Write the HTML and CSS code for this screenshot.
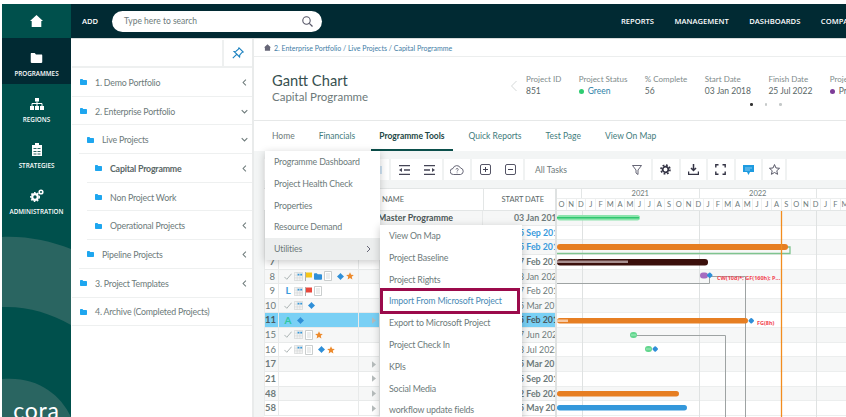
FILE: index.html
```html
<!DOCTYPE html>
<html lang="en">
<head>
<meta charset="utf-8">
<title>Gantt Chart</title>
<link rel="stylesheet" href="styles.css">
</head>
<body>
<svg class="defs" width="0" height="0">
  <symbol id="folder" viewBox="0 0 12 10"><path d="M0 1.2C0 .5.5 0 1.2 0h3l1.3 1.5h5.3c.7 0 1.2.5 1.2 1.2v6.1c0 .7-.5 1.2-1.2 1.2H1.2C.5 10 0 9.500 0 8.800z" fill="currentColor"/></symbol>
  <symbol id="left" viewBox="0 0 8 10"><path d="M6 1 2 5l4 4" fill="none" stroke="currentColor" stroke-width="1.500"/></symbol>
  <symbol id="down" viewBox="0 0 10 8"><path d="M1 2l4 4 4-4" fill="none" stroke="currentColor" stroke-width="1.500"/></symbol>
  <symbol id="check" viewBox="0 0 10 8"><path d="M.5 4.500 3.500 7.500 9.500 .5" fill="none" stroke="#9aa3a3" stroke-width="1"/></symbol>
  <symbol id="tbl" viewBox="0 0 10 10"><path d="M.5.5h9v9h-9z" fill="#f2f3f3" stroke="#c9cdcd" stroke-width=".6"/><path d="M3.500.5v9M6.500.5v9M.5 3.500h9M.5 6.500h9" stroke="#c9cdcd" stroke-width=".5"/><path d="M4 2h2v2H4zM7 2h2v2H7z" fill="#3498db"/></symbol>
  <symbol id="doc" viewBox="0 0 8 10"><path d="M.5.5h7v9h-7z" fill="#fff" stroke="#bcc2c2" stroke-width=".8"/><path d="M2 3h4M2 5h4M2 7h4" stroke="#c9cdcd" stroke-width=".7"/></symbol>
  <symbol id="flag" viewBox="0 0 7 9"><path d="M.5 0v9" stroke="#999" stroke-width=".8"/><path d="M1 .5h6v5H1z" fill="currentColor"/></symbol>
  <symbol id="dia" viewBox="0 0 8 8"><path d="M4 0l1.300 1.500L8 4 5.300 6.500 4 8 2.700 6.500 0 4l2.700-2.500z" fill="#2f8fd8"/></symbol>
  <symbol id="star" viewBox="0 0 10 10"><path d="M5 .3 6.400 3.500l3.400.3-2.600 2.200.8 3.400L5 7.600 2 9.400l.8-3.400L.2 3.800l3.400-.3z" fill="#ed8a2c"/></symbol>
  <symbol id="tri" viewBox="0 0 5 8"><path d="M0 0l5 4-5 4z" fill="#b5bbbb"/></symbol>
</svg>
<div class="app">
  <nav class="rail">
    <svg class="rail-arcs" width="69" height="413" viewBox="0 0 69 413"><path d="M0 233C25 232 48 237 69 245V321C48 309 25 302 0 303z" fill="#2a6561"/><path d="M0 375C35 372 58 390 69 413H0z" fill="#2a6561"/></svg>
    <a class="rail-home"><svg width="13" height="12" viewBox="0 0 13 12"><path d="M6.500 0 13 6h-1.700v6H1.700V6H0z" fill="#fff"/></svg></a>
    <a class="rail-item active"><div class="rail-ic"><svg width="13" height="10" viewBox="0 0 12 10"><use href="#folder" color="#fff"/></svg></div><span>PROGRAMMES</span></a>
    <a class="rail-item"><div class="rail-ic"><svg width="14" height="12" viewBox="0 0 14 12"><path d="M5 0h4v3.500H5zM0 8h4v4H0zM5 8h4v4H5zM10 8h4v4h-4z" fill="#fff"/><path d="M2 8V5.500h10V8M7 3.500V8" fill="none" stroke="#fff"/></svg></div><span>REGIONS</span></a>
    <a class="rail-item"><div class="rail-ic"><svg width="10" height="13" viewBox="0 0 10 13"><path d="M0 2h10v11H0z" fill="#fff"/><path d="M3 0h4v3H3z" fill="#fff"/><path d="M1.500 5h3v1h-3zM5.500 5h3v1h-3zM1.500 8h3v1h-3zM5.500 8h3v1h-3zM1.500 10.500h3v1h-3zM5.500 10.500h3v1h-3z" fill="#2a6561"/></svg></div><span>STRATEGIES</span></a>
    <a class="rail-item"><div class="rail-ic"><svg width="14" height="13" viewBox="0 0 14 13"><circle cx="5" cy="8" r="2.800" fill="none" stroke="#fff" stroke-width="2.200"/><circle cx="11" cy="3" r="1.800" fill="none" stroke="#fff" stroke-width="1.600"/><circle cx="5" cy="8" r="4.400" fill="none" stroke="#fff" stroke-width="1.200" stroke-dasharray="1.600 1.600"/></svg></div><span>ADMINISTRATION</span></a>
    <div class="rail-logo">cora</div>
  </nav>
  <div class="column">
    <header class="top">
      <span class="add">ADD</span>
      <div class="search">
        <span>Type here to search</span>
        <svg width="11" height="11" viewBox="0 0 11 11"><circle cx="4.500" cy="4.500" r="3.700" fill="none" stroke="#556" stroke-width="1.100"/><path d="M7.300 7.300 10.500 10.500" stroke="#556" stroke-width="1.200"/></svg>
      </div>
      <div class="top-nav"><span>REPORTS</span><span>MANAGEMENT</span><span>DASHBOARDS</span><span>COMPANY</span></div>
    </header>
    <div class="body">
      <aside class="tree">
        <div class="pin-row"><div class="pin"><svg width="12" height="12" viewBox="0 0 12 12"><path d="M7 .8 11.200 5 9.800 5.600 7.800 8 7.600 10 2 4.400 4 4.200 6.400 2.200zM4.400 7.600 .8 11.200" fill="none" stroke="#1c82c0" stroke-width="1.100"/></svg></div></div>
        <div class="node"><svg class="fi"><use href="#folder"/></svg><span>1. Demo Portfolio</span><svg class="chev"><use href="#left"/></svg></div>
        <div class="node"><svg class="fi"><use href="#folder"/></svg><span>2. Enterprise Portfolio</span><svg class="chev"><use href="#down"/></svg></div>
        <div class="node l1"><svg class="fi"><use href="#folder"/></svg><span>Live Projects</span><svg class="chev"><use href="#down"/></svg></div>
        <div class="node l2"><svg class="fi"><use href="#folder"/></svg><span class="cur">Capital Programme</span><svg class="chev"><use href="#left"/></svg></div>
        <div class="node l2"><svg class="fi"><use href="#folder"/></svg><span>Non Project Work</span></div>
        <div class="node l2"><svg class="fi"><use href="#folder"/></svg><span>Operational Projects</span><svg class="chev"><use href="#left"/></svg></div>
        <div class="node l1"><svg class="fi"><use href="#folder"/></svg><span>Pipeline Projects</span><svg class="chev"><use href="#left"/></svg></div>
        <div class="node"><svg class="fi"><use href="#folder"/></svg><span>3. Project Templates</span><svg class="chev"><use href="#left"/></svg></div>
        <div class="node"><svg class="fi"><use href="#folder"/></svg><span>4. Archive (Completed Projects)</span></div>
      </aside>
      <main class="main">
        <div class="crumb"><svg width="7" height="7" viewBox="0 0 13 12"><path d="M6.500 0 13 6h-1.700v6H1.700V6H0z" fill="#667"/></svg><span>2. Enterprise Portfolio / Live Projects / Capital Programme</span></div>
        <section class="head">
          <div class="title"><h1>Gantt Chart</h1><p>Capital Programme</p></div>
          <svg class="prev" width="8" height="12" viewBox="0 0 8 12"><path d="M6.500 1 1.500 6l5 5" fill="none" stroke="#d5d9d9" stroke-width="1"/></svg>
          <div class="stats">
            <div class="stat"><label>Project ID</label><b>851</b></div>
            <div class="stat"><label>Project Status</label><b class="link"><i class="dot green"></i>Green</b></div>
            <div class="stat"><label>% Complete</label><b>56</b></div>
            <div class="stat"><label>Start Date</label><b>03 Jan 2018</b></div>
            <div class="stat"><label>Finish Date</label><b>25 Jul 2022</b></div>
            <div class="stat"><label>Project Phase</label><b><i class="dot purple"></i>Programme</b></div>
          </div>
          <div class="pager"><i class="on"></i><i></i><i></i></div>
        </section>
        <div class="tabs">
          <a class="plain">Home</a><a>Financials</a><a class="on">Programme Tools</a><a>Quick Reports</a><a>Test Page</a><a>View On Map</a>
        </div>
        <div class="tools">
          <div class="tool t1"><i class="tb-blue"></i></div>
          <div class="tool t2">
            <svg width="11" height="10" viewBox="0 0 11 10"><path d="M0 .5h11M5 5h6M0 9.500h11" stroke="#445" stroke-width="1.500"/><path d="M0 5l3-2v4z" fill="#445"/></svg>
            <svg width="11" height="10" viewBox="0 0 11 10"><path d="M0 .5h11M0 5h6M0 9.500h11" stroke="#445" stroke-width="1.500"/><path d="M11 5 8 3v4z" fill="#445"/></svg>
          </div>
          <div class="tool t3"><svg width="14" height="10" viewBox="0 0 14 10"><path d="M3.500 9.500A3 3 0 0 1 3 3.500 4 4 0 0 1 10.500 3a3.300 3.300 0 0 1 0 6.500z" fill="none" stroke="#556" stroke-width=".9"/><path d="M6 4.500c0-1.500 2.200-1.500 2.200 0 0 1-1.100 1-1.100 2M7.100 7.500v.8" fill="none" stroke="#556" stroke-width=".8"/></svg></div>
          <div class="tool t4">
            <svg width="11" height="11" viewBox="0 0 11 11"><rect x=".5" y=".5" width="10" height="10" rx="1.500" fill="none" stroke="#556"/><path d="M3 5.500h5M5.500 3v5" stroke="#445"/></svg>
            <svg width="11" height="11" viewBox="0 0 11 11"><rect x=".5" y=".5" width="10" height="10" rx="1.500" fill="none" stroke="#556"/><path d="M3 5.500h5" stroke="#445"/></svg>
          </div>
          <div class="tool t5"><span>All Tasks</span><svg width="10" height="10" viewBox="0 0 10 10"><path d="M.5.5h9L6 5v4.500L4 8V5z" fill="none" stroke="#556" stroke-width=".9"/></svg></div>
          <div class="tool t6"><svg width="11" height="11" viewBox="0 0 11 11"><circle cx="5.500" cy="5.500" r="2.800" fill="none" stroke="#334" stroke-width="1.700"/><circle cx="5.500" cy="5.500" r="4.500" fill="none" stroke="#334" stroke-width="1.600" stroke-dasharray="1.800 1.730"/></svg></div>
          <div class="tool t6"><svg width="11" height="11" viewBox="0 0 11 11"><path d="M5.500 0v6M3 4l2.500 2.500L8 4" fill="none" stroke="#334" stroke-width="1.500"/><path d="M.5 7.500v3h10v-3" fill="none" stroke="#334" stroke-width="1.500"/></svg></div>
          <div class="tool t6"><svg width="11" height="11" viewBox="0 0 11 11"><path d="M.8 3.500V.8h2.700M7.500.8h2.700v2.700M10.200 7.500v2.700H7.500M3.500 10.200H.8V7.500" fill="none" stroke="#334" stroke-width="1.400"/></svg></div>
          <div class="tool t6"><svg width="11" height="10" viewBox="0 0 11 10"><path d="M0 0h11v7H7L5.500 10 4 7H0z" fill="#1e9be0"/><path d="M2 3h7M2 5h5" stroke="#cfeafa" stroke-width=".6"/></svg></div>
          <div class="tool t7"><svg width="11" height="11" viewBox="0 0 10 10"><path d="M5 .5 6.300 3.600l3.300.3-2.500 2.200.7 3.300L5 7.700 2.200 9.400l.7-3.300L.4 3.900l3.300-.3z" fill="none" stroke="#445" stroke-width=".8"/></svg></div>
          <div class="tool t8"></div>
        </div>
        <div class="gantt">
          <div class="grid">
            <div class="g-head"><span class="hn">NAME</span><span class="hd">START DATE</span></div>
            <div class="g-row alt bold"><span></span><span></span><span class="arr"></span><span class="nm">Master Programme</span><span class="dt">03 Jan 2018</span></div>
            <div class="g-row bold"><span></span><span></span><span class="arr"></span><span class="nm"></span><span class="dt blue">05 Sep 2018</span></div>
            <div class="g-row alt bold"><span></span><span></span><span class="arr"></span><span class="nm"></span><span class="dt blue">05 Feb 2018</span></div>
            <div class="g-row bold"><span>7</span><span></span><span class="arr"></span><span class="nm"></span><span class="dt">07 Feb 2018</span></div>
            <div class="g-row alt"><span>8</span><span class="ic"><svg class="i-chk"><use href="#check"/></svg><svg class="i-tbl"><use href="#tbl"/></svg><svg class="i-flag yel"><use href="#flag"/></svg><svg class="i-fold"><use href="#folder"/></svg><svg class="i-doc"><use href="#doc"/></svg><svg class="i-dia"><use href="#dia"/></svg><svg class="i-star"><use href="#star"/></svg></span><span></span><span class="nm"></span><span class="dt">03 Jan 2022</span></div>
            <div class="g-row"><span>9</span><span class="ic"><b class="ltr l">L</b><svg class="i-tbl"><use href="#tbl"/></svg><svg class="i-flag red"><use href="#flag"/></svg><svg class="i-doc"><use href="#doc"/></svg></span><span></span><span class="nm"></span><span class="dt">07 Feb 2018</span></div>
            <div class="g-row alt"><span>10</span><span class="ic"><svg class="i-chk"><use href="#check"/></svg><svg class="i-tbl"><use href="#tbl"/></svg><svg class="i-dia"><use href="#dia"/></svg></span><span></span><span class="nm"></span><span class="dt">05 Mar 2018</span></div>
            <div class="g-row sel bold"><span>11</span><span class="ic"><b class="ltr a">A</b><svg class="i-dia"><use href="#dia"/></svg></span><span class="arr"><svg class="i5"><use href="#tri"/></svg></span><span class="nm"></span><span class="dt">05 Feb 2018</span></div>
            <div class="g-row alt"><span>15</span><span class="ic"><svg class="i-chk"><use href="#check"/></svg><svg class="i-tbl"><use href="#tbl"/></svg><svg class="i-doc"><use href="#doc"/></svg><svg class="i-star"><use href="#star"/></svg></span><span></span><span class="nm"></span><span class="dt">07 Jun 2022</span></div>
            <div class="g-row"><span>16</span><span class="ic"><svg class="i-chk"><use href="#check"/></svg><svg class="i-tbl"><use href="#tbl"/></svg><svg class="i-doc"><use href="#doc"/></svg><svg class="i-dia"><use href="#dia"/></svg><svg class="i-star"><use href="#star"/></svg></span><span></span><span class="nm"></span><span class="dt">23 Jul 2022</span></div>
            <div class="g-row alt bold"><span>17</span><span></span><span class="arr"><svg class="i5"><use href="#tri"/></svg></span><span class="nm"></span><span class="dt">05 Mar 2018</span></div>
            <div class="g-row bold"><span>21</span><span></span><span class="arr"><svg class="i5"><use href="#tri"/></svg></span><span class="nm"></span><span class="dt">05 Sep 2018</span></div>
            <div class="g-row alt bold"><span>48</span><span></span><span class="arr"><svg class="i5"><use href="#tri"/></svg></span><span class="nm"></span><span class="dt">02 Feb 2022</span></div>
            <div class="g-row bold"><span>58</span><span></span><span class="arr"><svg class="i5"><use href="#tri"/></svg></span><span class="nm"></span><span class="dt">05 May 2018</span></div>
          </div>
          <div class="splitter"></div>
          <div class="chart">
            <div class="years"><span class="y0"></span><span class="y1">2021</span><span class="y1">2022</span><span class="y2"></span></div>
            <div class="months"><span>O</span><span>N</span><span>D</span><span>J</span><span>F</span><span>M</span><span>A</span><span>M</span><span>J</span><span>J</span><span>A</span><span>S</span><span>O</span><span>N</span><span>D</span><span>J</span><span>F</span><span>M</span><span>A</span><span>M</span><span>J</span><span>J</span><span>A</span><span>S</span><span>O</span><span>N</span><span>D</span><span>J</span><span>F</span><span>M</span></div>
            <div class="c-row alt"></div><div class="c-row"></div><div class="c-row alt"></div><div class="c-row"></div><div class="c-row alt"></div><div class="c-row"></div><div class="c-row alt"></div><div class="c-row"></div><div class="c-row alt"></div><div class="c-row"></div><div class="c-row alt"></div><div class="c-row"></div><div class="c-row alt"></div><div class="c-row"></div>
            <svg class="plot" width="289" height="207" viewBox="557 211 289 207">
              <path d="M582.500 211V418M699.500 211V418M816.500 211V418" stroke="#dfe2e2" stroke-width="1"/>
              <rect x="557" y="215" width="83" height="5.500" rx="2.700" fill="#8de4ad"/><path d="M557 217.700H639" stroke="#2fc66f" stroke-width="1.400"/>
              <path d="M557 253.500H790V247H787" fill="none" stroke="#7fc48f" stroke-width="1.300"/>
              <rect x="557" y="244" width="231" height="6" rx="3" fill="#e67e22"/>
              <rect x="557" y="259" width="151" height="6.500" rx="3" fill="#3b0f0b"/><rect x="557" y="260.500" width="71" height="2.500" fill="#a99090"/>
              <path d="M557 283.500H709.500V277M710 276.500H745.500V418M637 335.500H725.500V418" fill="none" stroke="#9ea3a3" stroke-width="1"/>
              <rect x="700" y="272.500" width="8" height="6" rx="3" fill="#a66cc0"/><rect x="707.500" y="273" width="4.500" height="4.500" rx="1" transform="rotate(45 709.750 275.250)" fill="#2f8fd8"/>
              <text x="717" y="279.500" class="note">CW(10d)*; GF(160h); P...</text>
              <rect x="557" y="318" width="191" height="5.500" rx="2.700" fill="#e67e22"/><rect x="557" y="319.500" width="11" height="2.500" fill="#f7c9a3"/>
              <rect x="749" y="318.500" width="4.500" height="4.500" rx="1" transform="rotate(45 751.250 320.750)" fill="#2f8fd8"/>
              <text x="757" y="324.500" class="note">FG(8h)</text>
              <rect x="630" y="332" width="7" height="6" rx="3" fill="#63d68e"/><path d="M631 335h5" stroke="#a5ecc0" stroke-width="1"/>
              <rect x="645" y="346" width="7" height="6" rx="3" fill="#63d68e"/><path d="M646 349h5" stroke="#a5ecc0" stroke-width="1"/>
              <rect x="653" y="346.800" width="4.500" height="4.500" rx="1" transform="rotate(45 655.250 349)" fill="#2f8fd8"/>
              <rect x="557" y="391" width="122" height="5.500" rx="2.700" fill="#e67e22"/>
              <rect x="557" y="405" width="130" height="5.500" rx="2.700" fill="#3498db"/>
              <path d="M781.500 211V418" stroke="#f28c1e" stroke-width="1.300"/>
            </svg>
          </div>
        </div>
        <ul class="menu m1">
          <li>Programme Dashboard</li><li>Project Health Check</li><li>Properties</li><li>Resource Demand</li>
          <li class="hover">Utilities<svg width="5" height="8" viewBox="0 0 5 8"><path d="M1 1l3 3-3 3" fill="none" stroke="#667" stroke-width="1"/></svg></li>
        </ul>
        <ul class="menu m2">
          <li>View On Map</li><li>Project Baseline</li><li>Project Rights</li><li class="mark">Import From Microsoft Project</li><li>Export to Microsoft Project</li><li>Project Check In</li><li>KPIs</li><li>Social Media</li><li>workflow update fields</li>
        </ul>
      </main>
    </div>
  </div>
</div>
</body>
</html>
```

FILE: styles.css
```css
* { box-sizing: border-box; }
html, body { margin: 0; height: 100%; }
body {
  width: 846px; height: 417px; overflow: hidden; background: #fff;
  padding: 4px 0 0 2px;
  font-family: "Lato", "Open Sans", sans-serif; color: #6d7a7a;
}
.defs { position: absolute; }
.app { display: flex; height: 413px; }

.rail { position: relative; width: 69px; flex: none; background: #00504c; display: flex; flex-direction: column; align-items: center; color: #fff; font-family: "Open Sans", sans-serif; }
.rail-arcs { position: absolute; left: 0; top: 0; }
.rail-home { position: relative; width: 100%; height: 34px; display: flex; align-items: center; justify-content: center; }
.rail-item { position: relative; width: 100%; height: 46px; display: flex; flex-direction: column; align-items: center; padding-top: 12.500px; gap: 5px; font-size: 6.300px; line-height: 8px; font-weight: 600; }
.rail-ic { height: 14px; display: flex; align-items: center; }
.rail-item.active { background: #012a33; }
.rail-logo { position: relative; margin-top: auto; height: 11px; line-height: 9px; font-family: "Lato", sans-serif; font-size: 23px; letter-spacing: .8px; }

.column { flex: 1; min-width: 0; display: flex; flex-direction: column; }
.top { height: 34px; flex: none; background: #012a33; display: flex; align-items: center; color: #fff; font-family: "Open Sans", sans-serif; font-size: 7.600px; font-weight: 600; padding-left: 11px; }
.add { width: 30px; flex: none; }
.search { width: 210px; flex: none; height: 21px; background: #fff; border-radius: 11px; display: flex; align-items: center; justify-content: space-between; padding: 0 9px 0 12px; color: #6d7a7a; font-family: "Lato", sans-serif; font-size: 8.500px; font-weight: 400; }
.top-nav { margin-left: 299px; display: flex; gap: 20.500px; white-space: nowrap; flex: none; }

.body { flex: 1; min-height: 0; display: flex; border-top: 1px solid #d8dcdc; }
.tree { width: 181px; flex: none; font-size: 8.800px; letter-spacing: -.2px; padding-left: 1px; }
.pin-row { height: 29px; display: flex; justify-content: flex-end; border-bottom: 2px solid #eef0f0; }
.pin { width: 30px; margin-top: 1px; border-left: 2px solid #eef0f0; display: flex; align-items: center; justify-content: center; }
.node { height: 28.700px; display: flex; align-items: center; border-bottom: 1.500px solid #eef0f0; padding: 1px 0 0 8px; }
.node.l1 { margin-left: 7px; }
.node.l2 { margin-left: 15px; }
.fi { width: 7px; height: 6px; color: #1ea6ef; flex: none; margin-right: 8px; }
.chev { width: 7px; height: 7px; margin-left: auto; margin-right: 4px; color: #6d7a7a; }
.cur { font-weight: 700; color: #5a6767; }

.main { position: relative; flex: 1; min-width: 0; border-left: 2px solid #e9ebeb; background: #f3f5f5; display: flex; flex-direction: column; overflow: hidden; }
.crumb { height: 18px; flex: none; background: #fff; border-bottom: 1px solid #eceeee; display: flex; align-items: center; gap: 3px; padding-left: 10px; font-size: 7px; color: #3f7ea6; }
.head { position: relative; height: 64px; flex: none; background: #fff; border-bottom: 1px solid #e6e8e8; display: flex; padding-left: 18px; white-space: nowrap; }
.title { width: 238px; flex: none; padding-top: 14px; }
.title h1 { margin: 0; font-size: 14.700px; line-height: 19px; font-weight: 400; color: #37504f; }
.title p { margin: 0; font-size: 11.500px; line-height: 14px; color: #6d7a7a; }
.prev { margin-top: 23px; flex: none; }
.stats { display: flex; gap: 17.500px; margin-left: 8px; padding-top: 16px; font-size: 8px; flex: none; }
.stat { display: flex; flex-direction: column; line-height: 12px; }
.stat label { color: #808b8b; }
.stat b { font-weight: 400; font-size: 8.500px; color: #5a6767; }
.stat b.link { color: #2e7fa8; }
.dot { display: inline-block; width: 5px; height: 5px; border-radius: 50%; margin-right: 4px; vertical-align: 0; }
.green { background: #2ecc71; }
.purple { background: #7d3c98; }
.pager { position: absolute; left: 496px; top: 46px; display: flex; gap: 12px; }
.pager i { width: 2.500px; height: 2.500px; border-radius: 50%; background: #c5c9c9; }
.pager i.on { background: #333; }

.tabs { height: 30px; flex: none; background: #fff; display: flex; gap: 8px; padding-left: 10px; font-size: 8.500px; color: #3f7c7c; }
.tabs a { padding: 2px 8px 0; line-height: 26px; border-bottom: 2px solid transparent; }
.tabs a.plain { color: #6d7a7a; }
.tabs a.on { color: #1d4745; font-weight: 700; border-bottom-color: #0b4f4b; }

.tools { margin: 8px 0 8px 10px; height: 21px; flex: none; display: flex; background: #fff; }
.tool { height: 100%; display: flex; align-items: center; justify-content: center; border-right: 2px solid #f0f2f2; flex: none; }
.t1 { width: 127px; justify-content: flex-end; padding-right: 7px; }
.tb-blue { width: 3px; height: 8px; background: #cfe3f3; }
.t2 { width: 53px; gap: 14px; }
.t3 { width: 28px; }
.t4 { width: 53px; gap: 14px; }
.t5 { width: 128px; justify-content: space-between; padding: 0 9px 0 10px; font-size: 8.600px; color: #6d7a7a; }
.t6 { width: 27.500px; }
.t7 { width: 24px; }
.t8 { flex: 1; border: 0; }

.gantt { margin-left: 10px; flex: 1; min-height: 0; display: flex; background: #fff; border-top: 1px solid #e3e6e6; }
.grid { width: 291px; flex: none; font-size: 8.800px; }
.g-head { height: 22px; display: flex; align-items: center; border-bottom: 1px solid #e3e6e6; font-size: 7.500px; color: #5a6767; }
.hn { margin-left: 118px; width: 101px; }
.hd { flex: 1; text-align: right; padding-right: 11px; border-left: 1px solid #e3e6e6; height: 100%; line-height: 21px; }
.g-row { height: 14.650px; display: grid; grid-template-columns: 15px 80px 21px 103px 72px; align-items: stretch; line-height: 13.600px; border-bottom: 1px solid #e8eaea; background: #fff; }
.g-row > span { border-right: 1px solid #e8eaea; white-space: nowrap; overflow: hidden; }
.g-row > span:first-child { text-align: right; padding-right: 3px; border-left: 1px solid #e8eaea; font-size: 9.500px; }
.g-row.alt { background: #f6f7f7; }
.g-row.bold { font-weight: 700; }
.g-row.sel { background: #79d0f5; color: #4b5a60; }
.nm { color: #4b5656; text-indent: -2px; }
.dt { padding-left: 31px; border-right: 0 !important; }
.dt.blue { color: #3a9bdc; }
.arr { display: flex; align-items: center; justify-content: flex-end; padding-right: 3px; }
.ic { display: flex; align-items: center; gap: 2px; padding-left: 5px; }
.i-chk { width: 8px; height: 7px; flex: none; }
.i-tbl { width: 9px; height: 9px; flex: none; }
.i-flag { width: 7px; height: 9px; flex: none; }
.i-fold { width: 8px; height: 7px; flex: none; color: #2f8fd8; }
.i-doc { width: 8px; height: 10px; flex: none; }
.i-dia { width: 7px; height: 7px; flex: none; margin-left: 3px; }
.i-star { width: 8px; height: 8px; flex: none; }
.i5 { width: 4px; height: 7px; }
.yel { color: #f5c518; }
.red { color: #e8473c; }
.ltr { font-size: 10px; width: 8px; text-align: center; font-weight: 700; }
.ltr.l { color: #3a9bdc; }
.ltr.a { color: #2fc6a0; }

.splitter { width: 2px; flex: none; background: #dfe2e2; }
.chart { position: relative; flex: 1; min-width: 0; overflow: hidden; }
.years { height: 10px; display: flex; font-size: 7.500px; line-height: 10px; color: #6d7a7a; text-align: center; border-bottom: 1px solid #eceeee; }
.y0 { width: 25px; flex: none; border-right: 1px solid #e3e6e6; }
.y1 { width: 117.500px; flex: none; border-right: 1px solid #e3e6e6; }
.y2 { flex: 1; }
.months { height: 12px; display: flex; font-size: 7.500px; line-height: 11px; color: #6d7a7a; border-bottom: 1px solid #e3e6e6; }
.months span { width: 9.790px; flex: none; text-align: center; border-right: 1px solid #eef0f0; }
.c-row { height: 14.650px; border-bottom: 1px solid #eceeee; }
.c-row.alt { background: #f6f7f7; }
.plot { position: absolute; left: 0; top: 22px; }
.note { font-size: 5.500px; font-weight: 700; fill: #f2434e; font-family: "Open Sans", sans-serif; }

.menu { position: absolute; margin: 0; padding: 0; list-style: none; background: #fff; font-size: 8.800px; letter-spacing: -.15px; color: #6d7a7a; box-shadow: 0 2px 8px rgba(0,0,0,.22); }
.menu li { height: 21.800px; line-height: 21.800px; padding-left: 9px; position: relative; white-space: nowrap; }
.m1 { left: 11px; top: 112px; width: 115px; }
.m2 { left: 126px; top: 186px; width: 142px; }
.hover { background: #eceeee; }
.hover svg { position: absolute; right: 9px; top: 7px; }
.menu .mark { color: #4b8ab5; outline: 3px solid #9b0a4b; outline-offset: -1px; margin-left: 2px; width: 136px; padding-left: 7px; }
```
